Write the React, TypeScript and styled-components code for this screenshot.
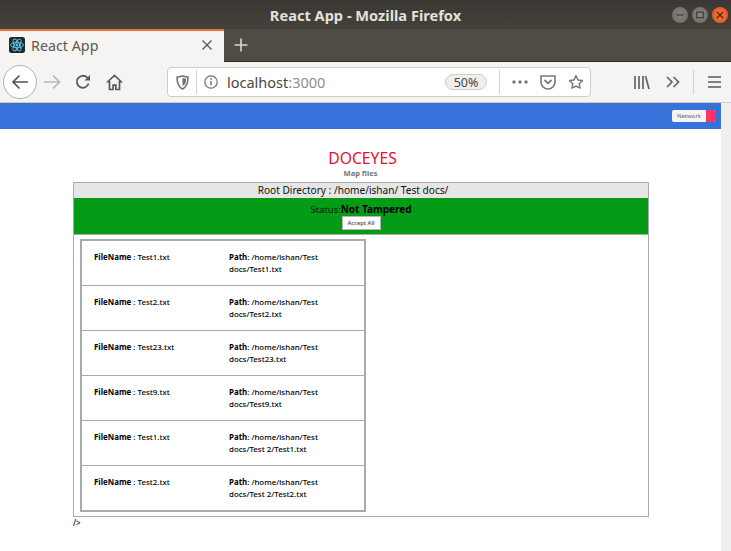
import React from 'react';
import styled, { createGlobalStyle } from 'styled-components';

const GlobalStyle = createGlobalStyle`
    html, body {
        margin: 0;
        padding: 0;
        background: #fff;
        overflow: hidden;
    }
    * { box-sizing: border-box; }
`;

const Window = styled.div`
    width: 731px;
    height: 551px;
    display: flex;
    flex-direction: column;
    overflow: hidden;
    font-family: "Noto Sans", "Open Sans", sans-serif;
`;

const TitleBar = styled.div`
    height: 29px;
    flex: none;
    display: flex;
    align-items: center;
    justify-content: center;
    position: relative;
    background: linear-gradient(#3a3833, #45423b);
    color: #e4e1da;
    font-size: 14.6px;
    font-weight: 700;
`;

const WindowButtons = styled.div`
    position: absolute;
    right: 3px;
    top: 7px;
    display: flex;
    gap: 4px;
`;

const WindowButton = styled.div<{ $close?: boolean }>`
    width: 16px;
    height: 16px;
    border-radius: 50%;
    background: ${(p) => (p.$close ? 'radial-gradient(#f0773e, #df4f1c)' : 'radial-gradient(#86847f, #6b6964)')};
    display: flex;
    align-items: center;
    justify-content: center;
`;

const TabStrip = styled.div`
    height: 33px;
    flex: none;
    display: flex;
    background: #4f4c45;
    border-bottom: 1px solid #2b2a26;
`;

const Tab = styled.div`
    width: 224px;
    height: 33px;
    display: flex;
    align-items: center;
    background: #f5f4f2;
    border-top: 2px solid #e9713f;
    padding: 0 0 3px 9px;
    color: #5f574f;
    font-size: 14.3px;
    gap: 6px;
`;

const TabTitle = styled.span`
    flex: 1;
`;

const TabClose = styled.div`
    width: 24px;
    height: 24px;
    display: flex;
    align-items: center;
    justify-content: center;
    margin-right: 5px;
`;

const NewTab = styled.div`
    width: 34px;
    display: flex;
    align-items: center;
    justify-content: center;
`;

const NavBar = styled.div`
    height: 41px;
    flex: none;
    display: flex;
    align-items: center;
    background: #f5f4f2;
    border-bottom: 1px solid #cfcdca;
`;

const BackButton = styled.div`
    width: 34px;
    height: 34px;
    margin-left: 3px;
    flex: none;
    border-radius: 50%;
    border: 1px solid #b3b1ae;
    background: #fff;
    display: flex;
    align-items: center;
    justify-content: center;
`;

const NavIcon = styled.div<{ $w?: number }>`
    width: ${(p) => p.$w ?? 32}px;
    flex: none;
    display: flex;
    align-items: center;
    justify-content: center;
`;

const UrlBar = styled.div`
    width: 424px;
    height: 30px;
    margin-left: 37px;
    flex: none;
    display: flex;
    align-items: center;
    background: #fff;
    border: 1px solid #cfcdca;
    border-radius: 4px;
`;

const UrlDivider = styled.div<{ $gap?: number }>`
    width: 1px;
    height: 24px;
    background: #d4d2cf;
    flex: none;
    margin: 0 ${(p) => p.$gap ?? 0}px;
`;

const UrlText = styled.div`
    flex: 1;
    font-size: 14.5px;
    color: #4a4641;
    margin-left: 3px;
`;

const UrlPort = styled.span`
    color: #8f8d8a;
`;

const ZoomPill = styled.div`
    width: 42px;
    height: 16px;
    border: 1px solid #cfcdca;
    border-radius: 8px;
    background: #f0efed;
    color: #4a4641;
    font-size: 12.5px;
    display: flex;
    align-items: center;
    justify-content: center;
`;

const PageActions = styled.div`
    display: flex;
    gap: 12px;
    margin-right: 6px;
`;

const ToolGroup = styled.div`
    display: flex;
    align-items: center;
    margin-left: 37px;
`;

const Viewport = styled.div`
    flex: 1;
    display: flex;
    min-height: 0;
`;

const Page = styled.div`
    width: 721px;
    flex: none;
    background: #fff;
`;

const Scrollbar = styled.div`
    flex: 1;
    background: #f0efed;
`;

const TopBar = styled.div`
    height: 26px;
    background: #3573db;
    display: flex;
    align-items: center;
    justify-content: flex-end;
    padding-right: 6px;
`;

const NetworkBadge = styled.div`
    width: 43px;
    height: 12px;
    display: flex;
    border-radius: 2px;
    overflow: hidden;
    background: #f5f5f5;
    color: #666;
    font-size: 6px;
    line-height: 12px;
`;

const NetworkLabel = styled.div`
    flex: 1;
    text-align: center;
`;

const NetworkState = styled.div`
    width: 9px;
    background: #fb3560;
`;

const Heading = styled.h1`
    margin: 19px 0 0;
    padding-left: 4px;
    text-align: center;
    color: #e8112d;
    font-size: 15.7px;
    font-weight: 400;
    line-height: 20px;
`;

const SubHeading = styled.div`
    text-align: center;
    color: #757575;
    font-size: 7.5px;
    font-weight: 700;
    line-height: 12px;
    margin-top: -1px;
`;

const Panel = styled.div`
    width: 576px;
    margin: 3px 0 0 73px;
`;

const RootRow = styled.div`
    height: 16px;
    background: #e6e6e6;
    border: 1px solid #aaa;
    border-bottom: 0;
    padding-right: 16px;
    text-align: center;
    font-size: 10.1px;
    line-height: 14px;
    color: #111;
`;

const StatusRow = styled.div`
    height: 37px;
    background: #049c17;
    border: 1px solid #aaa;
    border-top: 0;
    display: flex;
    flex-direction: column;
    align-items: center;
    padding-top: 4px;
    font-size: 9.5px;
    color: #111;
`;

const StatusLine = styled.div`
    line-height: 14px;
`;

const StatusValue = styled.b`
    color: #000;
    font-size: 10px;
`;

const AcceptButton = styled.button`
    width: 39px;
    height: 14px;
    margin-top: -1px;
    padding: 0;
    background: #fff;
    border: 1px solid #b5b5b5;
    color: #444;
    font-family: inherit;
    font-size: 5.8px;
    font-weight: 500;
`;

const ListBox = styled.div`
    height: 282px;
    border: 1px solid #aaa;
    border-top: 0;
    padding: 4px 0 0 6px;
`;

const FileTable = styled.div`
    width: 286px;
    border: 2px solid #aaa;
`;

const FileRow = styled.div`
    height: 45px;
    display: flex;
    padding: 10px 12px 0;
    border-top: 1px solid #aaa;
    font-size: 7.9px;
    font-weight: 500;
    line-height: 12px;
    color: #000;
    &:first-child {
        border-top: 0;
        height: 44px;
    }
`;

const NameCell = styled.div`
    width: 135px;
    flex: none;
`;

const PathCell = styled.div`
    width: 110px;
`;

const Stray = styled.div`
    margin: 0 0 0 73px;
    font-size: 8px;
    font-weight: 500;
    line-height: 12px;
    color: #000;
`;

const files = [
    { name: 'Test1.txt', path: 'docs/Test1.txt' },
    { name: 'Test2.txt', path: 'docs/Test2.txt' },
    { name: 'Test23.txt', path: 'docs/Test23.txt' },
    { name: 'Test9.txt', path: 'docs/Test9.txt' },
    { name: 'Test1.txt', path: 'docs/Test 2/Test1.txt' },
    { name: 'Test2.txt', path: 'docs/Test 2/Test2.txt' },
];

const ReactLogo = () => (
    <svg width="16" height="16" viewBox="0 0 16 16" fill="none">
        <rect width="16" height="16" rx="2.5" fill="#20262c" />
        <g stroke="#5cc9e4" strokeWidth="0.9">
            <ellipse cx="8" cy="8" rx="6.6" ry="2.6" />
            <ellipse cx="8" cy="8" rx="6.6" ry="2.6" transform="rotate(60 8 8)" />
            <ellipse cx="8" cy="8" rx="6.6" ry="2.6" transform="rotate(120 8 8)" />
        </g>
        <circle cx="8" cy="8" r="1.4" fill="#5cc9e4" />
    </svg>
);

const App: React.FC = () => {
    return (
        <Window>
            <GlobalStyle />
            <TitleBar>
                React App - Mozilla Firefox
                <WindowButtons>
                    <WindowButton>
                        <svg width="8" height="8" viewBox="0 0 8 8"><path d="M0.5 4h7" stroke="#3b3a36" strokeWidth="1.2" /></svg>
                    </WindowButton>
                    <WindowButton>
                        <svg width="8" height="8" viewBox="0 0 8 8"><rect x="0.7" y="1.2" width="6.6" height="5.6" fill="none" stroke="#3b3a36" strokeWidth="1.1" /></svg>
                    </WindowButton>
                    <WindowButton $close>
                        <svg width="8" height="8" viewBox="0 0 8 8"><path d="M1 1l6 6M7 1l-6 6" stroke="#4a2412" strokeWidth="1.2" /></svg>
                    </WindowButton>
                </WindowButtons>
            </TitleBar>
            <TabStrip>
                <Tab>
                    <ReactLogo />
                    <TabTitle>React App</TabTitle>
                    <TabClose>
                        <svg width="10" height="10" viewBox="0 0 10 10"><path d="M0.5 0.5l9 9M9.5 0.5l-9 9" stroke="#5c5a56" strokeWidth="1.4" /></svg>
                    </TabClose>
                </Tab>
                <NewTab>
                    <svg width="14" height="14" viewBox="0 0 14 14"><path d="M7 0.5v13M0.5 7h13" stroke="#d8d6d2" strokeWidth="1.6" /></svg>
                </NewTab>
            </TabStrip>
            <NavBar>
                <BackButton>
                    <svg width="18" height="16" viewBox="0 0 18 16" fill="none"><path d="M17 8H2M8.5 1.5L2 8l6.5 6.5" stroke="#55534f" strokeWidth="1.7" /></svg>
                </BackButton>
                <NavIcon $w={30}>
                    <svg width="17" height="16" viewBox="0 0 17 16" fill="none"><path d="M0 8h15M9 1.5L15.5 8 9 14.5" stroke="#b8b6b3" strokeWidth="1.7" /></svg>
                </NavIcon>
                <NavIcon $w={32}>
                    <svg width="16" height="16" viewBox="0 0 16 16" fill="none"><path d="M13.6 9.5A6 6 0 1 1 12 3.4L14.4 5.6" stroke="#5a5855" strokeWidth="1.8" /><path d="M15 1v5.6H9.4z" fill="#5a5855" /></svg>
                </NavIcon>
                <NavIcon $w={31}>
                    <svg width="17" height="17" viewBox="0 0 17 17" fill="none"><path d="M1 8.5L8.5 1.5 16 8.5M3.5 7v8.5h3.6v-4.4h2.8v4.4h3.6V7" stroke="#5a5855" strokeWidth="1.7" /></svg>
                </NavIcon>
                <UrlBar>
                    <NavIcon $w={28}>
                        <svg width="13" height="15" viewBox="0 0 13 15" fill="none"><path d="M1 2.2L6.5 1 12 2.2c0 5-1 9.5-5.5 11.8C2 11.7 1 7.2 1 2.2z" stroke="#706e6b" strokeWidth="1.5" /><path d="M6.5 3l3.6.8c0 3-.6 5.7-3.6 7.4z" fill="#706e6b" /></svg>
                    </NavIcon>
                    <UrlDivider />
                    <NavIcon $w={27}>
                        <svg width="14" height="14" viewBox="0 0 14 14" fill="none"><circle cx="7" cy="7" r="6.2" stroke="#706e6b" strokeWidth="1.2" /><path d="M7 6v4.2" stroke="#706e6b" strokeWidth="1.4" /><circle cx="7" cy="3.9" r="0.9" fill="#706e6b" /></svg>
                    </NavIcon>
                    <UrlText>localhost<UrlPort>:3000</UrlPort></UrlText>
                    <ZoomPill>50%</ZoomPill>
                    <UrlDivider $gap={12} />
                    <PageActions>
                        <NavIcon $w={16}>
                            <svg width="16" height="4" viewBox="0 0 16 4" fill="#7a7875"><circle cx="2" cy="2" r="1.7" /><circle cx="8" cy="2" r="1.7" /><circle cx="14" cy="2" r="1.7" /></svg>
                        </NavIcon>
                        <NavIcon $w={16}>
                            <svg width="16" height="15" viewBox="0 0 16 15" fill="none"><path d="M1 1h14v6a7 7 0 0 1-14 0z" stroke="#7a7875" strokeWidth="1.6" /><path d="M4.5 5L8 8.3 11.5 5" stroke="#7a7875" strokeWidth="1.8" /></svg>
                        </NavIcon>
                        <NavIcon $w={16}>
                            <svg width="17" height="16" viewBox="0 0 17 16" fill="none"><path d="M8.5 1.5l2.1 4.3 4.7.7-3.4 3.3.8 4.7-4.2-2.2-4.2 2.2.8-4.7L1.7 6.5l4.7-.7z" stroke="#7a7875" strokeWidth="1.6" strokeLinejoin="round" /></svg>
                        </NavIcon>
                    </PageActions>
                </UrlBar>
                <ToolGroup>
                    <NavIcon $w={28}>
                        <svg width="16" height="15" viewBox="0 0 16 15" fill="none" stroke="#666461" strokeWidth="1.7"><path d="M1 1v13M5 1v13M9 1v13M11.5 1l3.5 13" /></svg>
                    </NavIcon>
                    <NavIcon $w={34}>
                        <svg width="14" height="12" viewBox="0 0 14 12" fill="none" stroke="#666461" strokeWidth="1.7"><path d="M1 1l5 5-5 5M7.5 1l5 5-5 5" /></svg>
                    </NavIcon>
                    <UrlDivider $gap={3} />
                    <NavIcon $w={34}>
                        <svg width="13" height="12" viewBox="0 0 13 12" stroke="#5a5855" strokeWidth="1.6"><path d="M0 1h13M0 6h13M0 11h13" /></svg>
                    </NavIcon>
                </ToolGroup>
            </NavBar>
            <Viewport>
                <Page>
                    <TopBar>
                        <NetworkBadge>
                            <NetworkLabel>Network</NetworkLabel>
                            <NetworkState />
                        </NetworkBadge>
                    </TopBar>
                    <Heading>DOCEYES</Heading>
                    <SubHeading>Map files</SubHeading>
                    <Panel>
                        <RootRow>Root Directory : /home/ishan/ Test docs/</RootRow>
                        <StatusRow>
                            <StatusLine>Status:<StatusValue>Not Tampered</StatusValue></StatusLine>
                            <AcceptButton>Accept All</AcceptButton>
                        </StatusRow>
                        <ListBox>
                            <FileTable>
                                {files.map((file, index) => (
                                    <FileRow key={index}>
                                        <NameCell><b>FileName</b> : {file.name}</NameCell>
                                        <PathCell><b>Path</b>: /home/ishan/Test {file.path}</PathCell>
                                    </FileRow>
                                ))}
                            </FileTable>
                        </ListBox>
                    </Panel>
                    <Stray>/&gt;</Stray>
                </Page>
                <Scrollbar />
            </Viewport>
        </Window>
    );
};

export default App;
